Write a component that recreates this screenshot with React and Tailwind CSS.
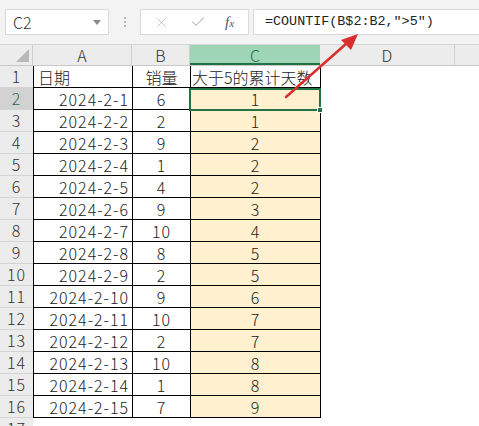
import { X, Check } from "lucide-react";

const rows = [
  ["2024-2-1", "6", "1"],
  ["2024-2-2", "2", "1"],
  ["2024-2-3", "9", "2"],
  ["2024-2-4", "1", "2"],
  ["2024-2-5", "4", "2"],
  ["2024-2-6", "9", "3"],
  ["2024-2-7", "10", "4"],
  ["2024-2-8", "8", "5"],
  ["2024-2-9", "2", "5"],
  ["2024-2-10", "9", "6"],
  ["2024-2-11", "10", "7"],
  ["2024-2-12", "2", "7"],
  ["2024-2-13", "10", "8"],
  ["2024-2-14", "1", "8"],
  ["2024-2-15", "7", "9"],
];

const font = { fontFamily: '"Noto Sans CJK SC", "Noto Sans", sans-serif' };

function RowHead({ n, active }) {
  return (
    <div
      className={`w-[33px] h-[22px] shrink-0 flex items-end justify-center pb-[1px] text-[16px] leading-[20px] font-light tracking-[1px] border-b border-[#d4d4d4] ${
        active ? "bg-[#d2d2d2] text-[#217346]" : "bg-[#ececec] text-[#333]"
      }`}
    >
      {n}
    </div>
  );
}

export default function App() {
  return (
    <div
      className="relative w-[479px] h-[426px] overflow-hidden bg-white text-[#222]"
      style={font}
    >
      {/* formula bar */}
      <div className="h-[45px] bg-[#f3f3f3] border-b border-[#d6d6d6] flex items-center pl-[5px] gap-0">
        <div className="w-[104px] h-[26px] bg-white border border-[#dadada] flex items-center justify-between px-[7px] text-[16px] font-light text-[#333]">
          <span>C2</span>
          <span className="w-0 h-0 border-l-[4px] border-r-[4px] border-t-[5px] border-l-transparent border-r-transparent border-t-[#8a8a8a]"></span>
        </div>
        <div className="w-[31px] flex flex-col items-center gap-[2px]">
          <span className="w-[2px] h-[2px] bg-[#b5b5b5]"></span>
          <span className="w-[2px] h-[2px] bg-[#b5b5b5]"></span>
          <span className="w-[2px] h-[2px] bg-[#b5b5b5]"></span>
        </div>
        <div className="w-[109px] h-[26px] bg-white border border-[#dadada] flex items-center">
          <X size={15} strokeWidth={1.6} className="ml-[13px] text-[#c4c4c4]" />
          <Check size={16} strokeWidth={1.8} className="ml-[21px] text-[#c4c4c4]" />
          <span
            className="ml-[19px] text-[15px] italic text-[#555]"
            style={{ fontFamily: '"Liberation Serif", serif' }}
          >
            f<span className="text-[11px]">x</span>
          </span>
        </div>
        <div
          className="ml-[4px] flex-1 h-[26px] bg-white border border-[#dadada] border-r-0 flex items-center pl-[11px] text-[13.4px] text-[#222]"
          style={{ fontFamily: '"Liberation Mono", monospace' }}
        >
          =COUNTIF(B$2:B2,"&gt;5")
        </div>
      </div>

      {/* column headers */}
      <div className="flex h-[21px] bg-[#ececec] border-b border-[#c8c8c8] text-[16px] leading-[20px] font-light">
        <div className="w-[33px] shrink-0 relative border-r border-[#d0d0d0]">
          <span
            className="absolute right-[3px] bottom-[3px] w-0 h-0"
            style={{ borderBottom: "13px solid #b9b9b9", borderLeft: "13px solid transparent" }}
          ></span>
        </div>
        <div className="w-[99px] shrink-0 text-center border-r border-[#d0d0d0] text-[#333]">A</div>
        <div className="w-[58px] shrink-0 text-center border-r border-[#d0d0d0] text-[#333]">B</div>
        <div className="w-[130px] shrink-0 text-center bg-[#9fd5b7] text-[#217346] border-b-2 border-[#217346]">C</div>
        <div className="w-[135px] shrink-0 text-center border-r border-[#d0d0d0] text-[#333]">D</div>
        <div className="flex-1"></div>
      </div>

      {/* row 1 */}
      <div className="flex font-light">
        <RowHead n={1} />
        <div className="w-[100px] shrink-0 h-[22px] border-l border-r border-b border-black flex items-end px-[4px] text-[16px] leading-[20px]">日期</div>
        <div className="w-[58px] shrink-0 h-[22px] border-r border-b border-black flex items-end justify-center text-[16px] leading-[20px]">销量</div>
        <div className="w-[130px] shrink-0 h-[22px] border-r border-b border-black flex items-end pl-[1px] text-[16px] leading-[20px] whitespace-nowrap">大于5的累计天数</div>
      </div>

      {rows.map(([d, v, c], i) => (
        <div className="flex font-light tracking-[1px]" key={d}>
          <RowHead n={i + 2} active={i === 0} />
          <div className="w-[100px] shrink-0 h-[22px] border-l border-r border-b border-black flex items-end justify-end pr-[3px] text-[16px] leading-[20px]">{d}</div>
          <div className="w-[58px] shrink-0 h-[22px] border-r border-b border-black flex items-end justify-center text-[16px] leading-[20px]">{v}</div>
          <div className="w-[130px] shrink-0 h-[22px] border-r border-b border-black bg-[#fff0cf] flex items-end justify-center text-[16px] leading-[20px]">{c}</div>
        </div>
      ))}

      <div className="flex">
        <RowHead n={17} />
      </div>

      {/* selection on C2 */}
      <div className="absolute left-[189px] top-[88px] w-[132px] h-[23px] border-2 border-[#217346] pointer-events-none"></div>
      <div className="absolute left-[317px] top-[107px] w-[6px] h-[6px] bg-[#217346] border border-white pointer-events-none"></div>

      {/* red arrow */}
      <svg className="absolute left-0 top-0 pointer-events-none" width="479" height="426">
        <line x1="286" y1="97" x2="347" y2="43" stroke="#d8302e" strokeWidth="2.5" strokeLinecap="round" />
        <polygon points="358,34 341,40 351,50" fill="#d8302e" />
      </svg>
    </div>
  );
}
